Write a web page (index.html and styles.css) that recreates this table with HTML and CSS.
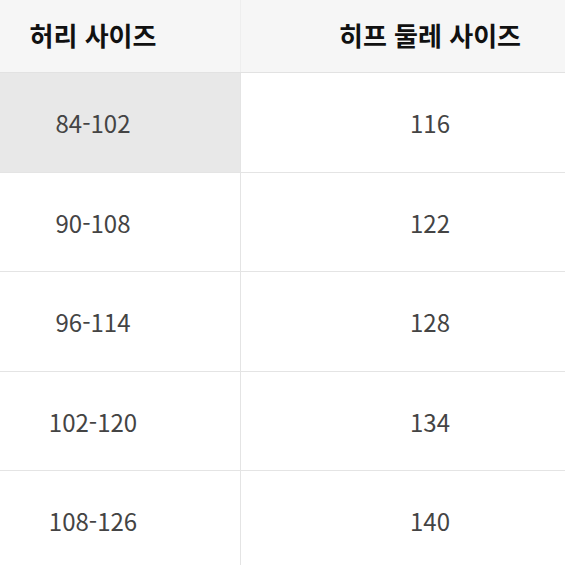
FILE: index.html
```html
<!DOCTYPE html>
<html lang="ko">
<head>
<meta charset="utf-8">
<link rel="stylesheet" href="styles.css">
</head>
<body>
<table class="size-table">
  <thead>
    <tr>
      <th class="c1">허리 사이즈</th>
      <th class="c2">히프 둘레 사이즈</th>
    </tr>
  </thead>
  <tbody>
    <tr><td class="c1 hl">84-102</td><td class="c2">116</td></tr>
    <tr><td class="c1">90-108</td><td class="c2">122</td></tr>
    <tr><td class="c1">96-114</td><td class="c2">128</td></tr>
    <tr><td class="c1">102-120</td><td class="c2">134</td></tr>
    <tr><td class="c1">108-126</td><td class="c2">140</td></tr>
  </tbody>
</table>
</body>
</html>
```
FILE: styles.css
```css
html, body {
  margin: 0;
  padding: 0;
  background: #ffffff;
  overflow: hidden;
}
.size-table {
  width: 565px;
  border-collapse: collapse;
  table-layout: fixed;
  font-family: "Noto Sans CJK KR", "Noto Sans", sans-serif;
}
.size-table th,
.size-table td {
  padding: 0;
  text-align: center;
  vertical-align: middle;
}
.size-table th {
  height: 69px;
  padding-bottom: 3px;
  background: #f6f6f6;
  color: #111111;
  font-size: 26px;
  font-weight: 700;
  line-height: 1;
  border-bottom: 1px solid #e2e2e2;
}
.size-table td {
  height: 96.5px;
  padding-top: 2px;
  color: #444444;
  font-size: 24px;
  font-weight: 400;
  line-height: 1;
  border-bottom: 1px solid #e4e4e4;
}
.size-table .c1 {
  width: 186px;
  padding-right: 54px;
  border-right: 1px solid #e4e4e4;
}
.size-table .c2 {
  padding-left: 54px;
}
.size-table th.c1 {
  border-right-color: #eeeeee;
}
.size-table .hl {
  background: #e8e8e8;
}
```
